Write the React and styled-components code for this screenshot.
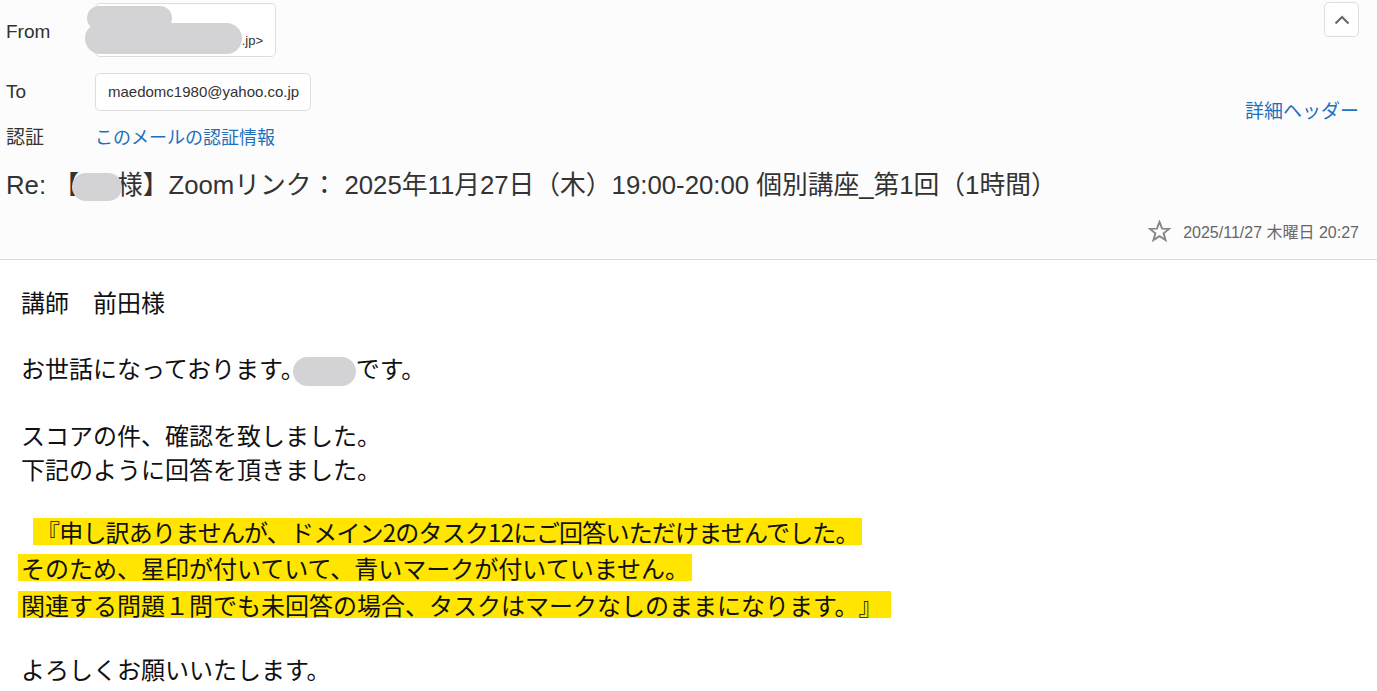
import styled, { createGlobalStyle } from 'styled-components';

const GlobalStyle = createGlobalStyle`
    html, body {
        margin: 0;
        padding: 0;
        background: #ffffff;
    }
    body {
        font-family: "Liberation Sans", "Noto Sans CJK JP", sans-serif;
        color: #333;
        text-spacing-trim: space-all;
    }
`

const Page = styled.div`
    width: 1377px;
    min-height: 691px;
    background: #ffffff;
`

const Header = styled.header`
    background: #fcfcfc;
    border-bottom: 1px solid #dcdcdc;
    padding: 3px 18px 18px 6px;
`

const TopArea = styled.div`
    display: flex;
    justify-content: space-between;
    align-items: flex-start;
`

const MetaList = styled.div`
    display: flex;
    flex-direction: column;
`

const MetaRow = styled.div`
    display: grid;
    grid-template-columns: 89px auto;
    align-items: center;
    margin-top: ${(p) => p.$top || 0}px;
    min-height: 24px;
`

const Label = styled.span`
    font-size: 19px;
    line-height: 24px;
    color: #333;
    padding-top: ${(p) => p.$drop || 0}px;
`

const AddressBox = styled.div`
    position: relative;
    box-sizing: border-box;
    width: ${(p) => p.$width}px;
    height: ${(p) => p.$height}px;
    border: 1px solid #dddddd;
    border-radius: 5px;
    background: #ffffff;
    display: flex;
    align-items: ${(p) => (p.$stack ? 'flex-end' : 'center')};
    justify-content: ${(p) => (p.$stack ? 'flex-end' : 'flex-start')};
    padding: ${(p) => (p.$stack ? '0 12px 6px' : '0 12px')};
    font-size: ${(p) => (p.$stack ? 13 : 15)}px;
    line-height: 18px;
    color: #333;
`

const Blot = styled.span`
    position: absolute;
    left: ${(p) => p.$left}px;
    top: ${(p) => p.$top}px;
    width: ${(p) => p.$w}px;
    height: ${(p) => p.$h}px;
    border-radius: ${(p) => p.$h / 2}px;
    background: #d3d3d5;
`

const InlineBlot = styled.span`
    position: relative;
    z-index: 1;
    display: inline-block;
    vertical-align: middle;
    width: ${(p) => p.$w}px;
    height: ${(p) => p.$h}px;
    border-radius: ${(p) => p.$h / 2}px;
    margin: 0 ${(p) => p.$mr || 0}px 0 ${(p) => p.$ml || 0}px;
    background: #d3d3d5;
`

const Link = styled.a`
    font-size: ${(p) => p.$size || 18}px;
    line-height: 24px;
    color: #1f6fbd;
    text-decoration: none;
    cursor: pointer;
`

const SideActions = styled.div`
    display: flex;
    flex-direction: column;
    align-items: flex-end;
`

const CollapseButton = styled.button`
    box-sizing: border-box;
    width: 35px;
    height: 35px;
    margin-top: -1px;
    margin-bottom: 63px;
    border: 1px solid #dddddd;
    border-radius: 5px;
    background: #ffffff;
    display: flex;
    align-items: center;
    justify-content: center;
    padding: 0;
    cursor: pointer;
`

const Subject = styled.h1`
    margin: 20px 0 0;
    font-weight: normal;
    font-size: 25.75px;
    line-height: 30px;
    color: #333;
    white-space: nowrap;
`

const DateRow = styled.div`
    display: flex;
    justify-content: flex-end;
    align-items: center;
    gap: 12px;
    margin-top: 20px;
    height: 20px;
    font-size: 16px;
    color: #666;
`

const Body = styled.main`
    padding: 25px 21px 0;
    font-family: "Noto Sans CJK JP", sans-serif;
    font-size: 24px;
    color: #111;
`

const Para = styled.div`
    line-height: 34px;
    margin-bottom: ${(p) => (p.$after === undefined ? 32 : p.$after)}px;
`

const QuoteLine = styled.div`
    height: 36.5px;
    display: flex;
    align-items: center;
`

const Mark = styled.span`
    display: inline-block;
    background: #ffe500;
    font-size: 24px;
    line-height: 27px;
    white-space: pre;
    padding: 0 3px;
    margin-left: ${(p) => (p.$indent ? 12 : -3)}px;
    letter-spacing: ${(p) => (p.$indent ? -0.8 : 0)}px;
`

const quote = [
    '『申し訳ありませんが、ドメイン2のタスク12にご回答いただけませんでした。',
    'そのため、星印が付いていて、青いマークが付いていません。',
    '関連する問題１問でも未回答の場合、タスクはマークなしのままになります。』 ',
];

function ChevronUp() {
    return (
        <svg width="16" height="10" viewBox="0 0 16 10">
            <polyline points="1.5,8.5 8,2 14.5,8.5" fill="none" stroke="#666" strokeWidth="2" />
        </svg>
    )
}

function StarOutline() {
    return (
        <svg width="23" height="23" viewBox="0 0 24 24">
            <polygon
                points="12,2 14.7,9 22,9.3 16.3,13.9 18.3,21 12,16.9 5.7,21 7.7,13.9 2,9.3 9.3,9"
                fill="none"
                stroke="#888"
                strokeWidth="2"
                strokeLinejoin="miter"
            />
        </svg>
    )
}

export default function App() {
    return (
        <Page>
            <GlobalStyle />
            <Header>
                <TopArea>
                    <MetaList>
                        <MetaRow>
                            <Label $drop={3}>From</Label>
                            <AddressBox $width={181} $height={54} $stack>
                                <Blot $left={-9} $top={2} $w={85} $h={24} />
                                <Blot $left={-11} $top={19} $w={157} $h={31} />
                                .jp&gt;
                            </AddressBox>
                        </MetaRow>
                        <MetaRow $top={16}>
                            <Label>To</Label>
                            <AddressBox $width={216} $height={38}>maedomc1980@yahoo.co.jp</AddressBox>
                        </MetaRow>
                        <MetaRow $top={15}>
                            <Label>認証</Label>
                            <Link>このメールの認証情報</Link>
                        </MetaRow>
                    </MetaList>
                    <SideActions>
                        <CollapseButton aria-label="collapse">
                            <ChevronUp />
                        </CollapseButton>
                        <Link $size={19}>詳細ヘッダー</Link>
                    </SideActions>
                </TopArea>
                <Subject>
                    Re: 【<InlineBlot $w={50} $h={28} $ml={-7} $mr={-5} />様】Zoomリンク： 2025年11月27日（木）19:00-20:00 個別講座_第1回（1時間）
                </Subject>
                <DateRow>
                    <StarOutline />
                    <span>2025/11/27 木曜日 20:27</span>
                </DateRow>
            </Header>
            <Body>
                <Para>講師　前田様</Para>
                <Para>お世話になっております。<InlineBlot $w={63} $h={29} $ml={-12} />です。</Para>
                <Para $after={27}>
                    スコアの件、確認を致しました。<br />
                    下記のように回答を頂きました。
                </Para>
                <Para $after={29}>
                    {quote.map((line, i) => (
                        <QuoteLine key={i}>
                            <Mark $indent={i === 0}>{line}</Mark>
                        </QuoteLine>
                    ))}
                </Para>
                <Para $after={0}>よろしくお願いいたします。</Para>
            </Body>
        </Page>
    )
}
